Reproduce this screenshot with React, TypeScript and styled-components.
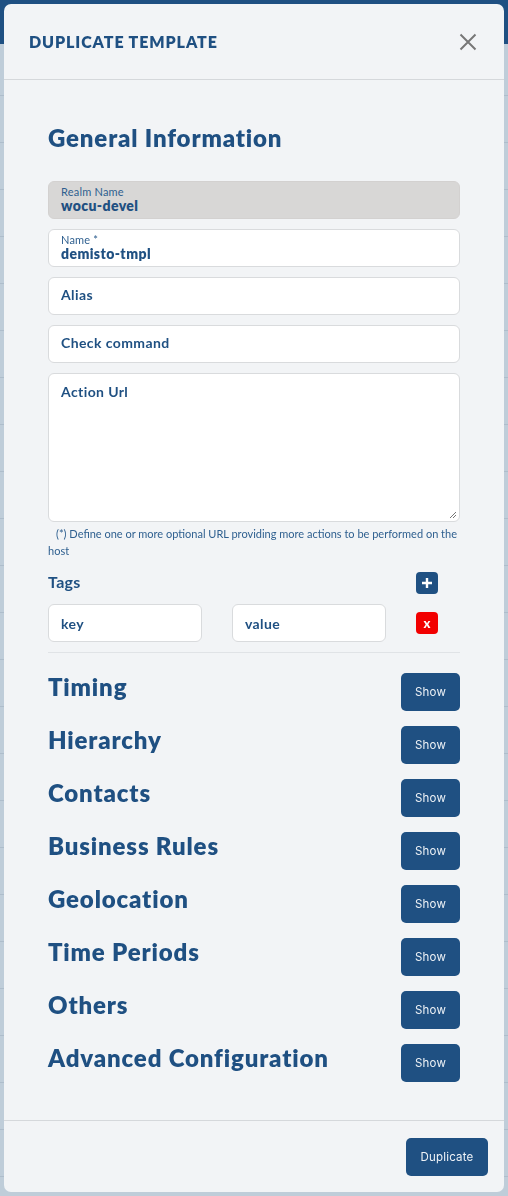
import React from 'react';
import styled, { createGlobalStyle } from 'styled-components';

const GlobalStyle = createGlobalStyle`
  html, body {
    margin: 0;
    padding: 0;
    background: #bfcdd9;
    font-family: Lato, "Open Sans", sans-serif;
  }
  * { box-sizing: border-box; }
`;

const blue = '#1f5082';

const Page = styled.div`
  min-height: 1196px;
  display: flex;
  flex-direction: column;
`;

const TopBar = styled.div`
  height: 44px;
  background: ${blue};
`;

const BackRow = styled.div<{ $h?: number }>`
  height: ${(p) => p.$h ?? 47}px;
  border-bottom: 1px solid #aebdcb;
`;

const Modal = styled.div`
  position: fixed;
  top: 4px;
  left: 4px;
  width: 500px;
  height: 1188px;
  background: #f2f4f6;
  border-radius: 7px;
  display: flex;
  flex-direction: column;
  overflow: hidden;
`;

const Header = styled.div`
  height: 76px;
  flex: none;
  display: flex;
  align-items: center;
  justify-content: space-between;
  padding: 0 25px 0 25px;
  border-bottom: 1px solid #d5d8db;
`;

const Title = styled.h1`
  margin: 0;
  font-size: 16px;
  font-weight: 800;
  letter-spacing: 0.9px;
  color: ${blue};
  text-transform: uppercase;
`;

const CloseButton = styled.button`
  width: 22px;
  height: 22px;
  padding: 0;
  border: 0;
  background: none;
  display: flex;
  align-items: center;
  justify-content: center;
`;

const Body = styled.div`
  flex: 1;
  padding: 44px 44px 0;
  border-bottom: 1px solid #d5d8db;
`;

const SectionTitle = styled.h2`
  margin: 0;
  font-size: 24px;
  line-height: 28px;
  font-weight: 800;
  letter-spacing: 0.85px;
  color: ${blue};
`;

const Fields = styled.div`
  margin-top: 29px;
  display: flex;
  flex-direction: column;
  gap: 10px;
`;

const Field = styled.div<{ $disabled?: boolean; $tall?: boolean }>`
  position: relative;
  height: ${(p) => (p.$tall ? 149 : 38)}px;
  border: 1px solid ${(p) => (p.$disabled ? '#d3d1d0' : '#d9dbdd')};
  border-radius: 6px;
  background: ${(p) => (p.$disabled ? '#d8d7d6' : '#ffffff')};
  padding: ${(p) => (p.$tall ? '10px 12px' : '0 12px 2px')};
  display: flex;
  flex-direction: column;
  justify-content: ${(p) => (p.$tall ? 'flex-start' : 'center')};
  color: ${blue};
`;

const SmallLabel = styled.span`
  font-size: 11px;
  line-height: 13px;
  letter-spacing: 0.2px;
  color: #2e5f8f;
`;

const Value = styled.span`
  font-size: 14px;
  line-height: 16px;
  font-weight: 800;
  letter-spacing: 0.4px;
`;

const Placeholder = styled.span`
  font-size: 14px;
  line-height: 16px;
  font-weight: 700;
  letter-spacing: 0.4px;
`;

const Grip = styled.svg`
  position: absolute;
  right: 2px;
  bottom: 2px;
`;

const Help = styled.p`
  margin: 3px 0 0;
  font-size: 11px;
  line-height: 17px;
  letter-spacing: 0;
  color: #2e5f8f;
  text-indent: 8px;
`;

const TagGrid = styled.div`
  display: grid;
  grid-template-columns: 154px 154px 22px 1fr;
  column-gap: 30px;
  align-items: center;
`;

const TagHeader = styled(TagGrid)`
  margin-top: 12px;
  height: 24px;
`;

const TagsLabel = styled.span`
  grid-column: 1 / 3;
  margin-top: -3px;
  font-size: 16px;
  font-weight: 700;
  letter-spacing: 0.3px;
  color: ${blue};
`;

const IconSquare = styled.button<{ $red?: boolean }>`
  width: 22px;
  height: 22px;
  padding: 0;
  border: 0;
  border-radius: 4px;
  background: ${(p) => (p.$red ? '#f20000' : blue)};
  color: #fff;
  display: flex;
  align-items: center;
  justify-content: center;
  font-family: Lato, sans-serif;
  font-weight: 900;
  font-size: 13px;
`;

const TagRow = styled(TagGrid)`
  margin-top: 9px;
  padding-bottom: 10px;
  border-bottom: 1px solid #e0e3e6;
`;

const TagInput = styled.div`
  height: 38px;
  border: 1px solid #d9dbdd;
  border-radius: 6px;
  background: #fff;
  padding: 0 12px;
  display: flex;
  align-items: center;
  font-size: 14px;
  font-weight: 700;
  letter-spacing: 0.4px;
  color: ${blue};
`;

const Sections = styled.div`
  margin-top: 20px;
  display: flex;
  flex-direction: column;
  gap: 15px;
`;

const SectionRow = styled.div`
  display: flex;
  align-items: center;
  justify-content: space-between;
  height: 38px;
`;

const RowTitle = styled(SectionTitle)`
  margin-top: -10px;
`;

const Button = styled.button<{ $w: number }>`
  width: ${(p) => p.$w}px;
  height: 38px;
  border: 0;
  border-radius: 5px;
  background: ${blue};
  color: #eef2f6;
  font-family: Inter, sans-serif;
  font-size: 11.5px;
  letter-spacing: 0.2px;
  padding: 0;
`;

const Footer = styled.div`
  height: 71px;
  flex: none;
  display: flex;
  justify-content: flex-end;
  padding: 17px 16px 0 0;
`;

const sections = [
  'Timing',
  'Hierarchy',
  'Contacts',
  'Business Rules',
  'Geolocation',
  'Time Periods',
  'Others',
  'Advanced Configuration',
];

export default function App() {
  return (
    <>
      <GlobalStyle />
      <Page>
        <TopBar />
        <BackRow $h={52} />
        {Array.from({ length: 23 }).map((_, i) => (
          <BackRow key={i} />
        ))}
      </Page>
      <Modal>
        <Header>
          <Title>Duplicate Template</Title>
          <CloseButton aria-label="close">
            <svg width="18" height="18" viewBox="0 0 18 18">
              <path d="M1.5 1.5L16.5 16.5M16.5 1.5L1.5 16.5" stroke="#777" strokeWidth="2" />
            </svg>
          </CloseButton>
        </Header>
        <Body>
          <SectionTitle>General Information</SectionTitle>
          <Fields>
            <Field $disabled>
              <SmallLabel>Realm Name</SmallLabel>
              <Value>wocu-devel</Value>
            </Field>
            <Field>
              <SmallLabel>Name *</SmallLabel>
              <Value>demisto-tmpl</Value>
            </Field>
            <Field>
              <Placeholder>Alias</Placeholder>
            </Field>
            <Field>
              <Placeholder>Check command</Placeholder>
            </Field>
            <Field $tall>
              <Placeholder>Action Url</Placeholder>
              <Grip width="9" height="9" viewBox="0 0 9 9">
                <path d="M8 2L2 8M8 5L5 8" stroke="#777" strokeWidth="1" />
              </Grip>
            </Field>
          </Fields>
          <Help>(*) Define one or more optional URL providing more actions to be performed on the host</Help>
          <TagHeader>
            <TagsLabel>Tags</TagsLabel>
            <IconSquare aria-label="add">
              <svg width="12" height="12" viewBox="0 0 12 12">
                <path d="M6 1V11M1 6H11" stroke="#fff" strokeWidth="2.4" />
              </svg>
            </IconSquare>
          </TagHeader>
          <TagRow>
            <TagInput>key</TagInput>
            <TagInput>value</TagInput>
            <IconSquare $red aria-label="remove">x</IconSquare>
          </TagRow>
          <Sections>
            {sections.map((s) => (
              <SectionRow key={s}>
                <RowTitle>{s}</RowTitle>
                <Button $w={59}>Show</Button>
              </SectionRow>
            ))}
          </Sections>
        </Body>
        <Footer>
          <Button $w={82}>Duplicate</Button>
        </Footer>
      </Modal>
    </>
  );
}
